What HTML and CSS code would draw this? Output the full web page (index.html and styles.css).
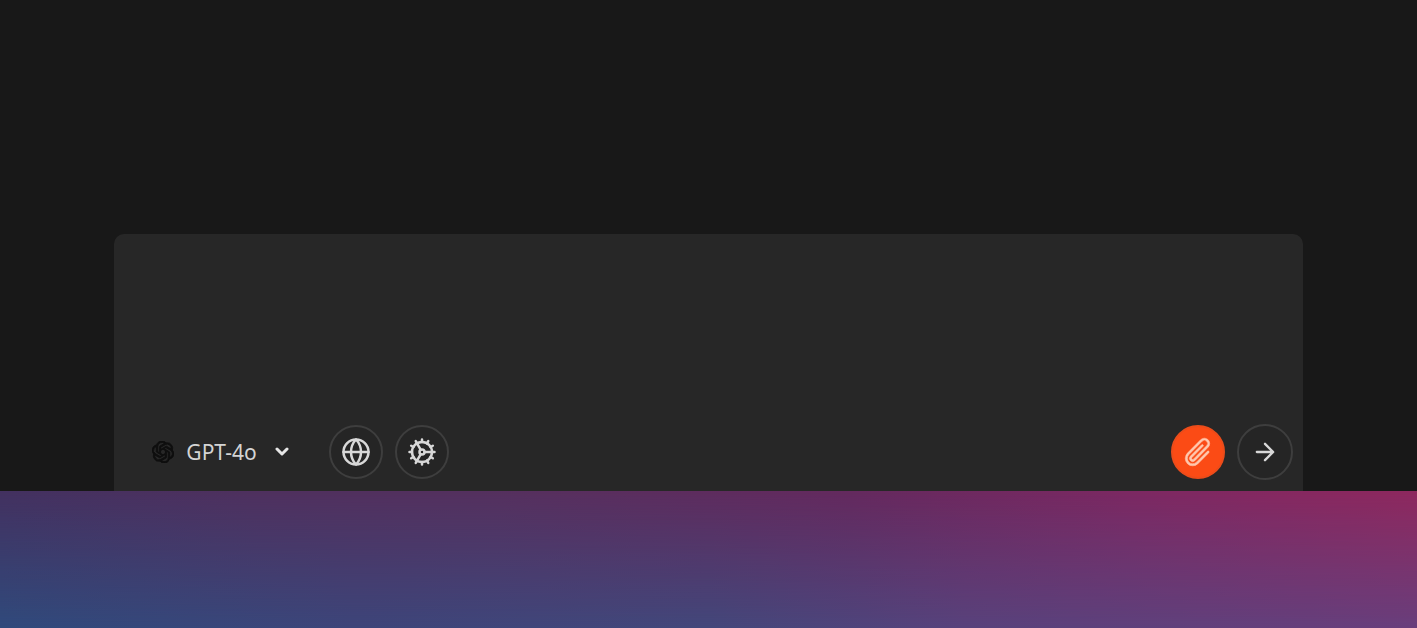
FILE: index.html
```
<!DOCTYPE html>
<html lang="en">
<head>
    <meta charset="UTF-8">
    <meta name="viewport" content="width=device-width, initial-scale=1">
    <title>Chat</title>
    <link rel="stylesheet" href="styles.css">
</head>
<body>

<main class="chat">
    <form class="prompt">
        <textarea class="prompt-text" aria-label="Message"></textarea>
        <div class="toolbar">
            <label class="model">
                <svg class="model-logo" viewBox="0 0 24 24" aria-hidden="true">
                    <path d="M22.2819 9.8211a5.9847 5.9847 0 0 0-.5157-4.9108 6.0462 6.0462 0 0 0-6.5098-2.9A6.0651 6.0651 0 0 0 4.9807 4.1818a5.9847 5.9847 0 0 0-3.9977 2.9 6.0462 6.0462 0 0 0 .7427 7.0966 5.98 5.98 0 0 0 .511 4.9107 6.051 6.051 0 0 0 6.5146 2.9001A5.9847 5.9847 0 0 0 13.2599 24a6.0557 6.0557 0 0 0 5.7718-4.2058 5.9894 5.9894 0 0 0 3.9977-2.9001 6.0557 6.0557 0 0 0-.7475-7.0729zm-9.022 12.6081a4.4755 4.4755 0 0 1-2.8764-1.0408l.1419-.0804 4.7783-2.7582a.7948.7948 0 0 0 .3927-.6813v-6.7369l2.02 1.1686a.071.071 0 0 1 .038.052v5.5826a4.504 4.504 0 0 1-4.4945 4.4944zm-9.6607-4.1254a4.4708 4.4708 0 0 1-.5346-3.0137l.142.0852 4.783 2.7582a.7712.7712 0 0 0 .7806 0l5.8428-3.3685v2.3324a.0804.0804 0 0 1-.0332.0615L9.74 19.9502a4.4992 4.4992 0 0 1-6.1408-1.6464zM2.3408 7.8956a4.485 4.485 0 0 1 2.3655-1.9728V11.6a.7664.7664 0 0 0 .3879.6765l5.8144 3.3543-2.0201 1.1685a.0757.0757 0 0 1-.071 0l-4.8303-2.7865A4.504 4.504 0 0 1 2.3408 7.872zm16.5963 3.8558L13.1038 8.364 15.1192 7.2a.0757.0757 0 0 1 .071 0l4.8303 2.7913a4.4944 4.4944 0 0 1-.6765 8.1042v-5.6772a.79.79 0 0 0-.407-.667zm2.0107-3.0231l-.142-.0852-4.7735-2.7818a.7759.7759 0 0 0-.7854 0L9.409 9.2297V6.8974a.0662.0662 0 0 1 .0284-.0615l4.8303-2.7866a4.4992 4.4992 0 0 1 6.6802 4.66zM8.3065 12.863l-2.02-1.1638a.0804.0804 0 0 1-.038-.0567V6.0742a4.4992 4.4992 0 0 1 7.3757-3.4537l-.142.0805L8.704 5.459a.7948.7948 0 0 0-.3927.6813zm1.0976-2.3654l2.602-1.4998 2.6069 1.4998v2.9994l-2.5974 1.4997-2.6067-1.4997Z"/>
                </svg>
                <select class="model-select" aria-label="Model">
                    <option>GPT-4o</option>
                </select>
                <svg class="model-arrow" viewBox="0 0 14 10" aria-hidden="true">
                    <path d="M2 2l5 5 5-5"/>
                </svg>
            </label>
            <button type="button" class="round" aria-label="Search the web">
                <svg class="icon" viewBox="0 0 24 24">
                    <circle cx="12" cy="12" r="10"/>
                    <path d="M12 2a14.5 14.5 0 0 0 0 20 14.5 14.5 0 0 0 0-20M2 12h20"/>
                </svg>
            </button>
            <button type="button" class="round" aria-label="Settings">
                <svg class="icon" viewBox="0 0 24 24">
                    <circle cx="12" cy="12" r="8"/>
                    <circle cx="12" cy="12" r="2"/>
                    <path d="M14 12h8M11 10.27 7 3.34M11 13.73l-4 6.93"/>
                    <path d="M12 2v2M12 22v-2M2 12h2M17 20.66l-1-1.73M20.66 17l-1.73-1M3.34 7l1.73 1M20.66 7l-1.73 1M3.34 17l1.73-1M17 3.34l-1 1.73"/>
                </svg>
            </button>
            <button type="button" class="round attach" aria-label="Attach file">
                <svg class="icon-clip" viewBox="0 0 256 256">
                    <path d="M209.66,122.34a8,8,0,0,1,0,11.32l-82.05,82a56,56,0,0,1-79.2-79.21L147.67,35.73a40,40,0,1,1,56.61,56.55L105,193A24,24,0,1,1,71,159L154.3,74.38A8,8,0,1,1,165.7,85.6L82.39,170.31a8,8,0,1,0,11.27,11.36L192.93,81A24,24,0,1,0,159,47L59.76,147.68a40,40,0,1,0,56.53,56.62l82.06-82A8,8,0,0,1,209.66,122.34Z"/>
                </svg>
            </button>
            <button type="submit" class="round send" aria-label="Send">
                <svg class="icon" viewBox="0 0 24 24">
                    <path d="M5 12h13M12 5l7 7-7 7"/>
                </svg>
            </button>
        </div>
    </form>
</main>
<div class="glow"></div>

</body>
</html>
```
FILE: styles.css
```
body {
    background: #181818;
    display: flex;
    flex-direction: column;
    font-family: "Noto Sans", sans-serif;
    margin: 0;
    min-height: 100vh;
}
.chat {
    display: flex;
    flex: 1;
    flex-direction: column;
    justify-content: flex-end;
    padding: 0 8%;
}
.prompt {
    background: #272727;
    border-radius: 10px 10px 0 0;
    margin: 0 1px;
}
.prompt-text {
    background: none;
    border: 0;
    box-sizing: border-box;
    color: #dcdcdc;
    display: block;
    font: 21px "Noto Sans", sans-serif;
    height: 190px;
    outline: none;
    padding: 24px 38px;
    resize: none;
    width: 100%;
}
.toolbar {
    align-items: center;
    display: flex;
    gap: 12px;
    padding: 0 10px 11px 38px;
}
.model {
    align-items: center;
    display: flex;
    margin-right: 28px;
}
.model-logo {
    fill: #0e0e0e;
    height: 22px;
    margin-right: 12px;
    stroke: #0e0e0e;
    width: 22px;
}
.model-select {
    appearance: none;
    background: none;
    border: 0;
    color: #d4d4d4;
    font: 21px "Noto Sans", sans-serif;
    margin: 0;
    outline: none;
    padding: 0;
}
.model-arrow {
    fill: none;
    height: 10px;
    margin-left: 18px;
    stroke: #e6e6e6;
    stroke-linecap: round;
    stroke-linejoin: round;
    stroke-width: 3;
    width: 14px;
}
.round {
    align-items: center;
    background: #252525;
    border: 2px solid #3e3e3e;
    border-radius: 50%;
    box-sizing: border-box;
    display: flex;
    flex-shrink: 0;
    height: 54px;
    justify-content: center;
    padding: 0;
    width: 54px;
}
.icon {
    fill: none;
    height: 30px;
    stroke: #d8d8d8;
    stroke-linecap: round;
    stroke-linejoin: round;
    stroke-width: 2;
    width: 30px;
}
.attach {
    background: #fb4b15;
    border-color: #ec4c1a;
    margin-left: auto;
}
.icon-clip {
    fill: #ffc8ae;
    height: 34px;
    stroke: #ffc8ae;
    stroke-width: 4;
    width: 34px;
}
.send {
    height: 56px;
    width: 56px;
}
.send .icon {
    height: 28px;
    width: 28px;
}
.glow {
    background: linear-gradient(to right, #304a7c, #3d457a 25%, #43477b 50%, #58427c 68%, #693e7c);
    height: 137px;
}
/* the warm half, fading out towards the bottom */
.glow::before {
    background: linear-gradient(to right, #433160, #4f305e 18%, #55305e 35%, #64295e 60%, #7c2862 80%, #8e285e);
    content: "";
    display: block;
    height: 100%;
    mask-image: linear-gradient(#000, transparent);
}
```
